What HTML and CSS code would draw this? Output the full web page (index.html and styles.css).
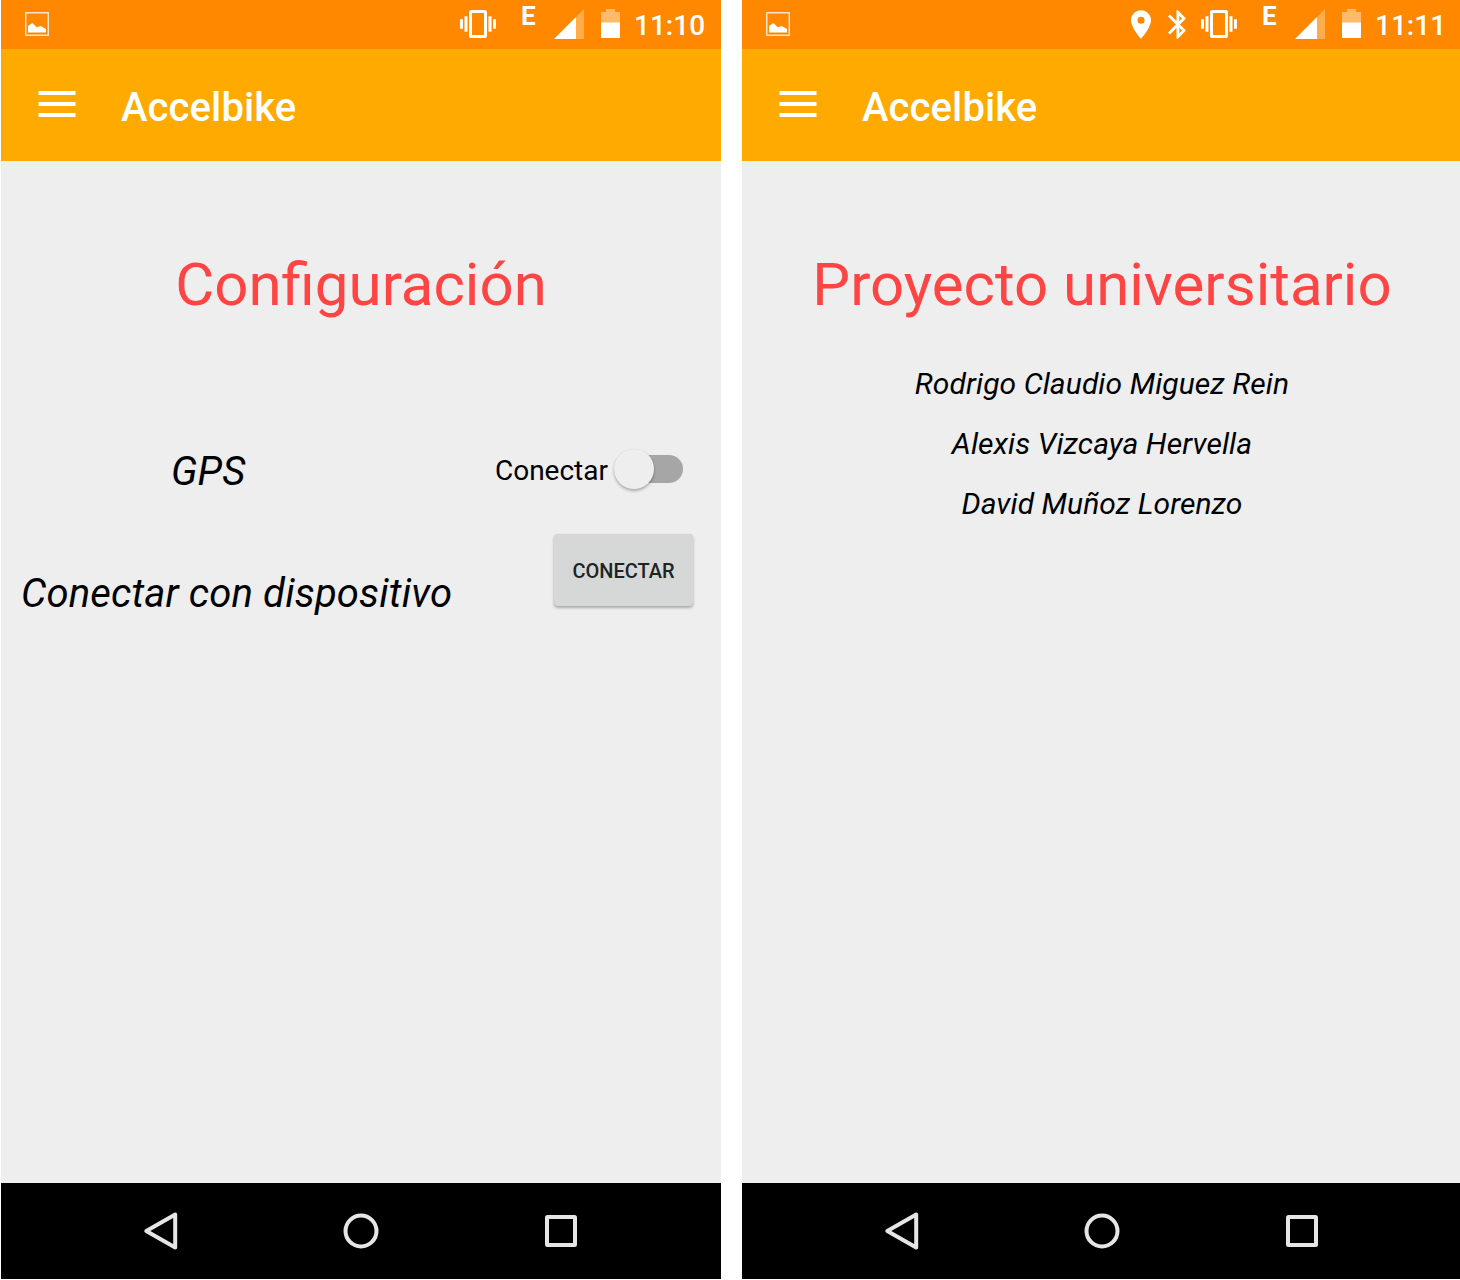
FILE: index.html
```html
<!DOCTYPE html>
<html lang="es">
<head>
<meta charset="utf-8">
<title>Accelbike</title>
<link rel="stylesheet" href="styles.css">
</head>
<body>
<svg class="defs" aria-hidden="true">
  <symbol id="picture" viewBox="0 0 24 24"><rect x=".75" y=".75" width="22.5" height="22.5" fill="none" stroke="#ffe4c6" stroke-width="1.5"/><path fill="#fff" d="M3 20.500V14l4.300-3 4.500 4.300 4-1.200 5.200 2.900v3.500z"/></symbol>
  <symbol id="vibrate" viewBox="0 3 24 18" preserveAspectRatio="none"><path fill="#fff" d="M0 15h2V9H0v6zm3 2h2V7H3v10zm19-8v6h2V9h-2zm-3 8h2V7h-2v10zM16.5 3h-9C6.67 3 6 3.67 6 4.5v15c0 .83.67 1.5 1.5 1.5h9c.83 0 1.5-.67 1.5-1.5v-15c0-.83-.67-1.5-1.5-1.5zM16 19H8V5h8v14z"/></symbol>
  <symbol id="signal" viewBox="0 0 30 30"><path fill="#fff" fill-opacity=".3" d="M22 8l8-8v30h-8z"/><path fill="#fff" d="M0 30L22 8v22z"/></symbol>
  <symbol id="battery" viewBox="0 0 19 29"><path fill="#fff" fill-opacity=".42" d="M0 13.3V3h5V0h9v3h5v10.300z"/><path fill="#fff" d="M0 13.300h19V29H0z"/></symbol>
  <symbol id="pin" viewBox="5 2 14 20"><path fill="#fff" d="M12 2C8.130 2 5 5.130 5 9c0 5.250 7 13 7 13s7-7.750 7-13c0-3.870-3.130-7-7-7zm0 9.500a2.500 2.500 0 0 1 0-5 2.500 2.500 0 0 1 0 5z"/></symbol>
  <symbol id="bluetooth" viewBox="5 2 12.710 20"><path fill="#fff" d="M17.710 7.710L12 2h-1v7.590L6.410 5 5 6.410 10.590 12 5 17.590 6.410 19 11 14.410V22h1l5.710-5.710-4.300-4.290 4.300-4.290zM13 5.830l1.880 1.880L13 9.590V5.830zm1.880 10.460L13 18.170v-3.760l1.880 1.880z"/></symbol>
  <symbol id="menu" viewBox="0 0 38 26"><path fill="#fff" d="M.5 0h37v4H.5zM.5 11h37v4H.5zM.5 22h37v4H.5z"/></symbol>
  <symbol id="back" viewBox="0 0 40 40"><path d="M34.200 3.500v33L5.300 20z"/></symbol>
  <symbol id="home" viewBox="0 0 40 40"><circle cx="20" cy="20" r="15.500"/></symbol>
  <symbol id="recent" viewBox="0 0 40 40"><rect x="6" y="6" width="28" height="28" rx=".5"/></symbol>
</svg>

<main class="screens">
  <section class="phone">
    <div class="status">
      <svg class="i-picture"><use href="#picture"/></svg>
      <svg class="i-vibrate"><use href="#vibrate"/></svg>
      <span class="network">E</span>
      <svg class="i-signal"><use href="#signal"/></svg>
      <svg class="i-battery"><use href="#battery"/></svg>
      <span class="clock">11:10</span>
    </div>
    <header class="toolbar">
      <svg class="i-menu"><use href="#menu"/></svg>
      <h1 class="app-name">Accelbike</h1>
    </header>
    <div class="content">
      <h2 class="title">Configuración</h2>
      <div class="setting gps">
        <span class="label">GPS</span>
        <label class="switch-row"><span class="switch-text">Conectar</span><span class="switch"><span class="thumb"></span></span></label>
      </div>
      <div class="setting device">
        <span class="label">Conectar con dispositivo</span>
        <button class="button">CONECTAR</button>
      </div>
    </div>
    <nav class="navbar">
      <svg class="nav-icon"><use href="#back"/></svg>
      <svg class="nav-icon"><use href="#home"/></svg>
      <svg class="nav-icon"><use href="#recent"/></svg>
    </nav>
  </section>

  <section class="phone">
    <div class="status">
      <svg class="i-picture"><use href="#picture"/></svg>
      <svg class="i-pin"><use href="#pin"/></svg>
      <svg class="i-bluetooth"><use href="#bluetooth"/></svg>
      <svg class="i-vibrate"><use href="#vibrate"/></svg>
      <span class="network">E</span>
      <svg class="i-signal"><use href="#signal"/></svg>
      <svg class="i-battery"><use href="#battery"/></svg>
      <span class="clock">11:11</span>
    </div>
    <header class="toolbar">
      <svg class="i-menu"><use href="#menu"/></svg>
      <h1 class="app-name">Accelbike</h1>
    </header>
    <div class="content">
      <h2 class="title">Proyecto universitario</h2>
      <ul class="authors">
        <li>Rodrigo Claudio Miguez Rein</li>
        <li>Alexis Vizcaya Hervella</li>
        <li>David Muñoz Lorenzo</li>
      </ul>
    </div>
    <nav class="navbar">
      <svg class="nav-icon"><use href="#back"/></svg>
      <svg class="nav-icon"><use href="#home"/></svg>
      <svg class="nav-icon"><use href="#recent"/></svg>
    </nav>
  </section>
</main>
</body>
</html>
```
FILE: styles.css
```css
* { box-sizing: border-box; }

body {
  margin: 0;
  background: #fff;
  color: #000;
  font-family: Roboto, sans-serif;
  overflow: hidden;
}

.defs { display: none; }

.screens {
  display: flex;
  gap: 21px;
  padding-left: 1px;
  width: 1460px;
  overflow: hidden;
}

.phone {
  flex: 0 0 720px;
  height: 1279px;
  display: flex;
  flex-direction: column;
  background: #eee;
}

/* Status bar */
.status {
  height: 49px;
  padding: 0 15px 0 24px;
  display: flex;
  align-items: flex-start;
  background: #ff8800;
  color: #fff;
}
.status svg { flex: none; }
.i-picture { width: 24px; height: 24px; margin: 12px auto 0 0; }
.i-pin { width: 20px; height: 29px; margin: 9.500px 17px 0 0; }
.i-bluetooth { width: 18px; height: 29px; margin: 9.500px 15px 0 0; }
.i-vibrate { width: 36px; height: 28px; margin: 10px 25px 0 0; }
.network {
  width: 17px;
  margin: 1px 16px 0 0;
  font-size: 26px;
  font-weight: 700;
  line-height: 31px;
}
.i-signal { width: 30px; height: 30px; margin: 9px 17px 0 0; }
.i-battery { width: 19px; height: 29px; margin: 9px 14px 0 0; }
.clock {
  width: 72px;
  margin-top: 9px;
  font-size: 28px;
  font-weight: 500;
  line-height: 33px;
  white-space: nowrap;
}

/* App bar */
.toolbar {
  height: 112px;
  padding-left: 37px;
  display: flex;
  align-items: flex-start;
  gap: 45px;
  background: #ffaa00;
  color: #fff;
}
.i-menu { width: 38px; height: 26px; margin-top: 42px; }
.app-name {
  margin: 35px 0 0;
  font-size: 40px;
  font-weight: 500;
  line-height: 47px;
  letter-spacing: .1px;
}

/* Screen content */
.content { flex: 1; padding-top: 89px; }
.title {
  margin: 0;
  font-size: 60px;
  font-weight: 400;
  line-height: 70px;
  text-align: center;
  color: #ff4444;
}

.setting {
  display: flex;
  justify-content: space-between;
  align-items: flex-start;
}
.label {
  font-size: 40px;
  font-style: italic;
  line-height: 47px;
  letter-spacing: .15px;
  white-space: nowrap;
}
.gps { padding: 128px 38px 0 170px; }
.device { padding: 38px 28px 0 20px; }
.device .label { margin-top: 37px; }

.switch-row { display: flex; gap: 6px; }
.switch-text { font-size: 28px; line-height: 33px; margin-top: 6px; }
.switch {
  width: 69px;
  height: 28px;
  margin-top: 7px;
  border-radius: 14px;
  display: flex;
  align-items: center;
  background: linear-gradient(to right, transparent 20px, #a6a6a6 20px);
}
.thumb {
  width: 40px;
  height: 40px;
  flex: none;
  border-radius: 50%;
  background: #eee;
  box-shadow: 0 2px 3px rgba(0, 0, 0, .27), 0 0 1px rgba(0, 0, 0, .12);
}

.button {
  width: 139px;
  height: 72px;
  margin: 1px 0 0;
  padding: 2px 0 0;
  border: 0;
  border-radius: 4px;
  background: #d6d7d7;
  color: #212323;
  font: 500 20px/24px Roboto, sans-serif;
  box-shadow: 0 2px 3px rgba(0, 0, 0, .28), 0 0 1px rgba(0, 0, 0, .15);
}

.authors {
  margin: 34px 0 0;
  padding: 0;
  list-style: none;
  font-size: 30px;
  font-style: italic;
  line-height: 60px;
  letter-spacing: .08px;
  text-align: center;
}

/* System navigation */
.navbar {
  height: 96px;
  padding: 0 60px;
  display: flex;
  justify-content: space-around;
  align-items: center;
  background: #000;
}
.nav-icon {
  width: 40px;
  height: 40px;
  fill: none;
  stroke: #e6e6e6;
  stroke-width: 4;
  stroke-linejoin: round;
}
```
